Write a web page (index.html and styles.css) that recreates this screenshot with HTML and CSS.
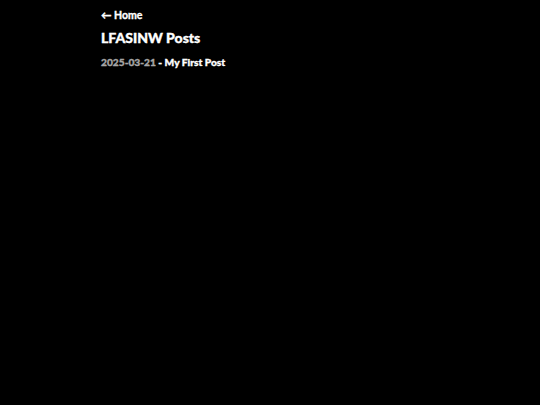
FILE: index.html
```html
<!DOCTYPE html>
<html>
<head>
<meta charset="utf-8">
<link rel="stylesheet" href="styles.css">
</head>
<body>
<main class="wrap">
  <a class="home" href="#">← Home</a>
  <h1 class="title">LFASINW Posts</h1>
  <ul class="posts">
    <li><span class="date">2025-03-21</span> - <a href="#">My First Post</a></li>
  </ul>
</main>
</body>
</html>
```
FILE: styles.css
```css
html, body {
  margin: 0;
  background: #000;
  color: #fff;
  font-family: "Lato", "Inter", sans-serif;
  font-weight: 700;
}
.wrap {
  width: 338px;
  margin: 0 auto;
  padding-top: 8px;
}
a { color: #fff; text-decoration: none; }
.home, .title, .posts {
  -webkit-text-stroke: 0.35px currentColor;
}
.home {
  display: block;
  font-size: 10.5px;
  line-height: 14px;
}
.title {
  margin: 5.5px 0 0;
  font-size: 14px;
  line-height: 20px;
  font-weight: 900;
}
.posts {
  list-style: none;
  margin: 7.5px 0 0;
  padding: 0;
  font-size: 10.2px;
  line-height: 14px;
  font-weight: 900;
}
.date { color: #a6a6a6; }
```
